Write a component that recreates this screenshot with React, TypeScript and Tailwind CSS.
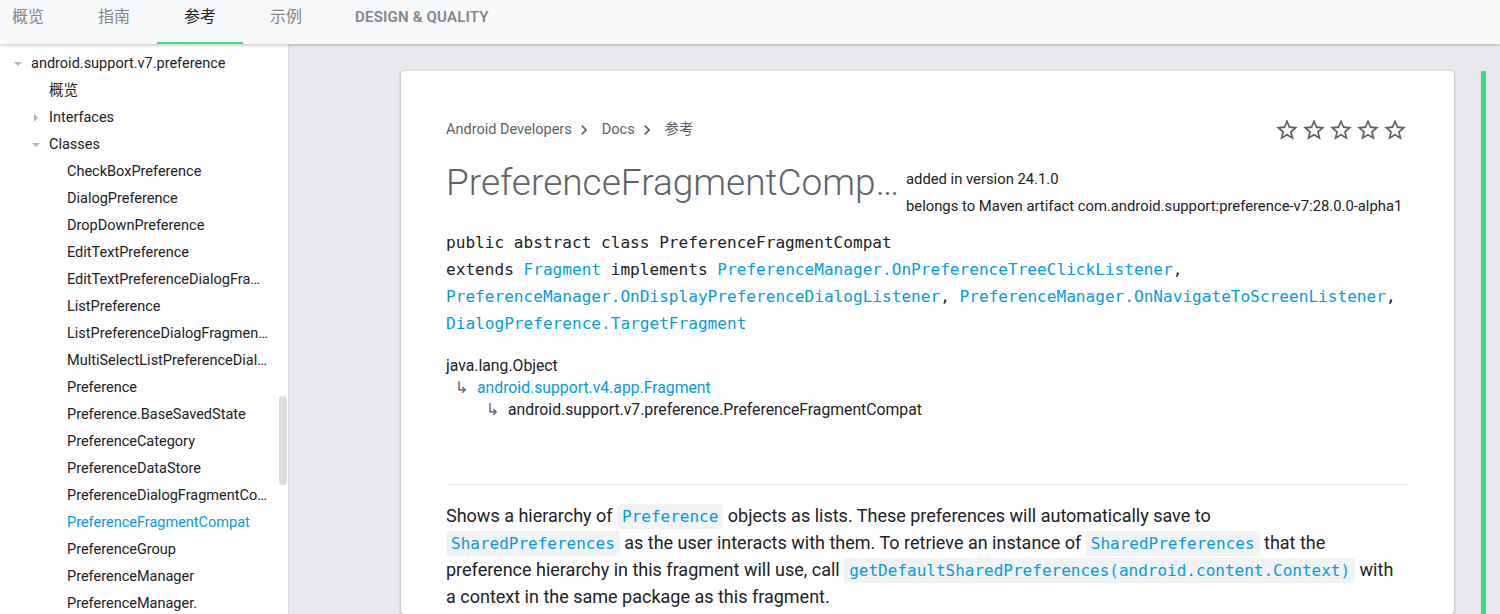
import React from 'react';

const sans = { fontFamily: 'Roboto, "Noto Sans CJK SC", sans-serif' };
const mono = { fontFamily: '"DejaVu Sans Mono", "Liberation Mono", monospace' };

const tabs = ['概览', '指南', '参考', '示例'];

const classes = [
  'CheckBoxPreference',
  'DialogPreference',
  'DropDownPreference',
  'EditTextPreference',
  'EditTextPreferenceDialogFra…',
  'ListPreference',
  'ListPreferenceDialogFragmen…',
  'MultiSelectListPreferenceDial…',
  'Preference',
  'Preference.BaseSavedState',
  'PreferenceCategory',
  'PreferenceDataStore',
  'PreferenceDialogFragmentCo…',
  'PreferenceFragmentCompat',
  'PreferenceGroup',
  'PreferenceManager',
  'PreferenceManager.',
];

const Caret: React.FC<{ open: boolean }> = ({ open }) => (
  <svg width="10" height="10" viewBox="0 0 10 10" className="shrink-0">
    {open ? <path d="M1 3h8L5 7z" fill="#b0b4b8" /> : <path d="M3 1v8l4-4z" fill="#b0b4b8" />}
  </svg>
);

const Star: React.FC = () => (
  <svg width="26" height="26" viewBox="0 0 24 24" fill="#5f6368">
    <path d="M22 9.24l-7.19-.62L12 2 9.19 8.63 2 9.24l5.46 4.73L5.82 21 12 17.27 18.18 21l-1.63-7.03L22 9.24zM12 15.4l-3.76 2.27 1-4.28-3.32-2.88 4.38-.38L12 6.1l1.71 4.04 4.38.38-3.32 2.88 1 4.28L12 15.4z" />
  </svg>
);

const Chevron: React.FC = () => (
  <svg width="20" height="20" viewBox="0 0 24 24" fill="#5f6368" className="ml-[2px] mr-[8px]">
    <path d="M10 6L8.59 7.41 13.17 12l-4.58 4.59L10 18l6-6z" />
  </svg>
);

const Code: React.FC<{ children: React.ReactNode }> = ({ children }) => (
  <code
    className="bg-[#f1f3f4] text-[#039be5] text-[16px] leading-none px-[5px] py-[3px] rounded-[2px]"
    style={mono}
  >
    {children}
  </code>
);

const Link: React.FC<{ children: React.ReactNode }> = ({ children }) => (
  <span className="text-[#039be5]">{children}</span>
);

export default function App() {
  return (
    <div className="w-[1500px] h-[614px] overflow-hidden flex flex-col bg-[#e8eaed]" style={sans}>
      {/* top tabs */}
      <div className="relative z-10 h-[44px] shrink-0 bg-[#f8f9fa] shadow-[0_1px_3px_rgba(60,64,67,0.35)] flex">
        <div className="flex -ml-[15px]">
          {tabs.map((t) => (
            <div
              key={t}
              className={
                'w-[86px] h-[44px] flex justify-center pt-[6px] text-[16px] leading-[22px] ' +
                (t === '参考' ? 'text-[#202124] border-b-2 border-[#3ddc84]' : 'text-[#80868b]')
              }
            >
              {t}
            </div>
          ))}
          <div className="pl-[26px] pt-[6px] text-[15px] leading-[22px] font-semibold text-[#80868b] tracking-[0.2px]">
            DESIGN &amp; QUALITY
          </div>
        </div>
      </div>

      <div className="flex flex-1 min-h-0">
        {/* sidebar */}
        <div className="relative w-[289px] shrink-0 bg-white border-r border-[#dadce0] pt-[6px] text-[14.5px] text-[#202124]">
          <div className="flex items-center h-[27px] pl-[13px] gap-[8px]">
            <Caret open />
            <span>android.support.v7.preference</span>
          </div>
          <div className="flex items-center h-[27px] pl-[49px]">概览</div>
          <div className="flex items-center h-[27px] pl-[31px] gap-[8px]">
            <Caret open={false} />
            <span>Interfaces</span>
          </div>
          <div className="flex items-center h-[27px] pl-[31px] gap-[8px]">
            <Caret open />
            <span>Classes</span>
          </div>
          {classes.map((c) => (
            <div
              key={c}
              className={
                'h-[27px] leading-[27px] pl-[67px] pr-[16px] truncate ' +
                (c === 'PreferenceFragmentCompat' ? 'text-[#039be5]' : '')
              }
            >
              {c}
            </div>
          ))}
          <div className="absolute left-[279px] top-[352px] w-[8px] h-[89px] rounded-full bg-[#dadce0]" />
        </div>

        {/* main */}
        <div className="flex flex-1 pl-[112px] pt-[27px] gap-[27px]">
          <div className="w-[1053px] shrink-0 bg-white rounded-[4px] shadow-[0_1px_2px_rgba(60,64,67,0.3),0_1px_3px_1px_rgba(60,64,67,0.15)] px-[45px] pt-[49px]">
            <div className="flex items-center justify-between h-[20px]">
              <div className="flex items-center text-[14.5px] text-[#5f6368]">
                <span>Android Developers</span>
                <Chevron />
                <span>Docs</span>
                <Chevron />
                <span>参考</span>
              </div>
              <div className="flex gap-[1px] mr-[1px]">
                <Star />
                <Star />
                <Star />
                <Star />
                <Star />
              </div>
            </div>

            <div className="flex items-start mt-[19px]">
              <h1 className="w-[458px] shrink-0 truncate text-[37px] leading-[48px] font-light text-[#5f6368] pr-[1px]">
                PreferenceFragmentCompat
              </h1>
              <div className="mt-[7px] ml-[2px] whitespace-nowrap text-[14.8px] leading-[27px] text-[#202124]">
                <div>added in version 24.1.0</div>
                <div>belongs to Maven artifact com.android.support:preference-v7:28.0.0-alpha1</div>
              </div>
            </div>

            <div className="mt-[9px] text-[16.1px] leading-[27px] text-[#202124]" style={mono}>
              <div>public abstract class PreferenceFragmentCompat</div>
              <div>
                extends <Link>Fragment</Link> implements <Link>PreferenceManager.OnPreferenceTreeClickListener</Link>,
              </div>
              <div>
                <Link>PreferenceManager.OnDisplayPreferenceDialogListener</Link>,{' '}
                <Link>PreferenceManager.OnNavigateToScreenListener</Link>,
              </div>
              <div>
                <Link>DialogPreference.TargetFragment</Link>
              </div>
            </div>

            <div className="mt-[18px] text-[15.75px] leading-[22px] text-[#202124]">
              <div>java.lang.Object</div>
              <div className="pl-[9px] flex">
                <span className="w-[22px] text-[#5f6368]">↳</span>
                <Link>android.support.v4.app.Fragment</Link>
              </div>
              <div className="pl-[40px] flex">
                <span className="w-[22px] text-[#5f6368]">↳</span>
                <span>android.support.v7.preference.PreferenceFragmentCompat</span>
              </div>
            </div>

            <div className="mt-[63px] border-t border-[#e8eaed]" />

            <p className="mt-[17px] text-[18px] leading-[27px] text-[#202124]">
              Shows a hierarchy of <Code>Preference</Code> objects as lists. These preferences will automatically save to
              <br />
              <Code>SharedPreferences</Code> as the user interacts with them. To retrieve an instance of{' '}
              <Code>SharedPreferences</Code> that the
              <br />
              preference hierarchy in this fragment will use, call{' '}
              <Code>getDefaultSharedPreferences(android.content.Context)</Code> with
              <br />a context in the same package as this fragment.
            </p>
          </div>
          <div className="w-[5px] shrink-0 bg-[#3ddc84]" />
        </div>
      </div>
    </div>
  );
}
